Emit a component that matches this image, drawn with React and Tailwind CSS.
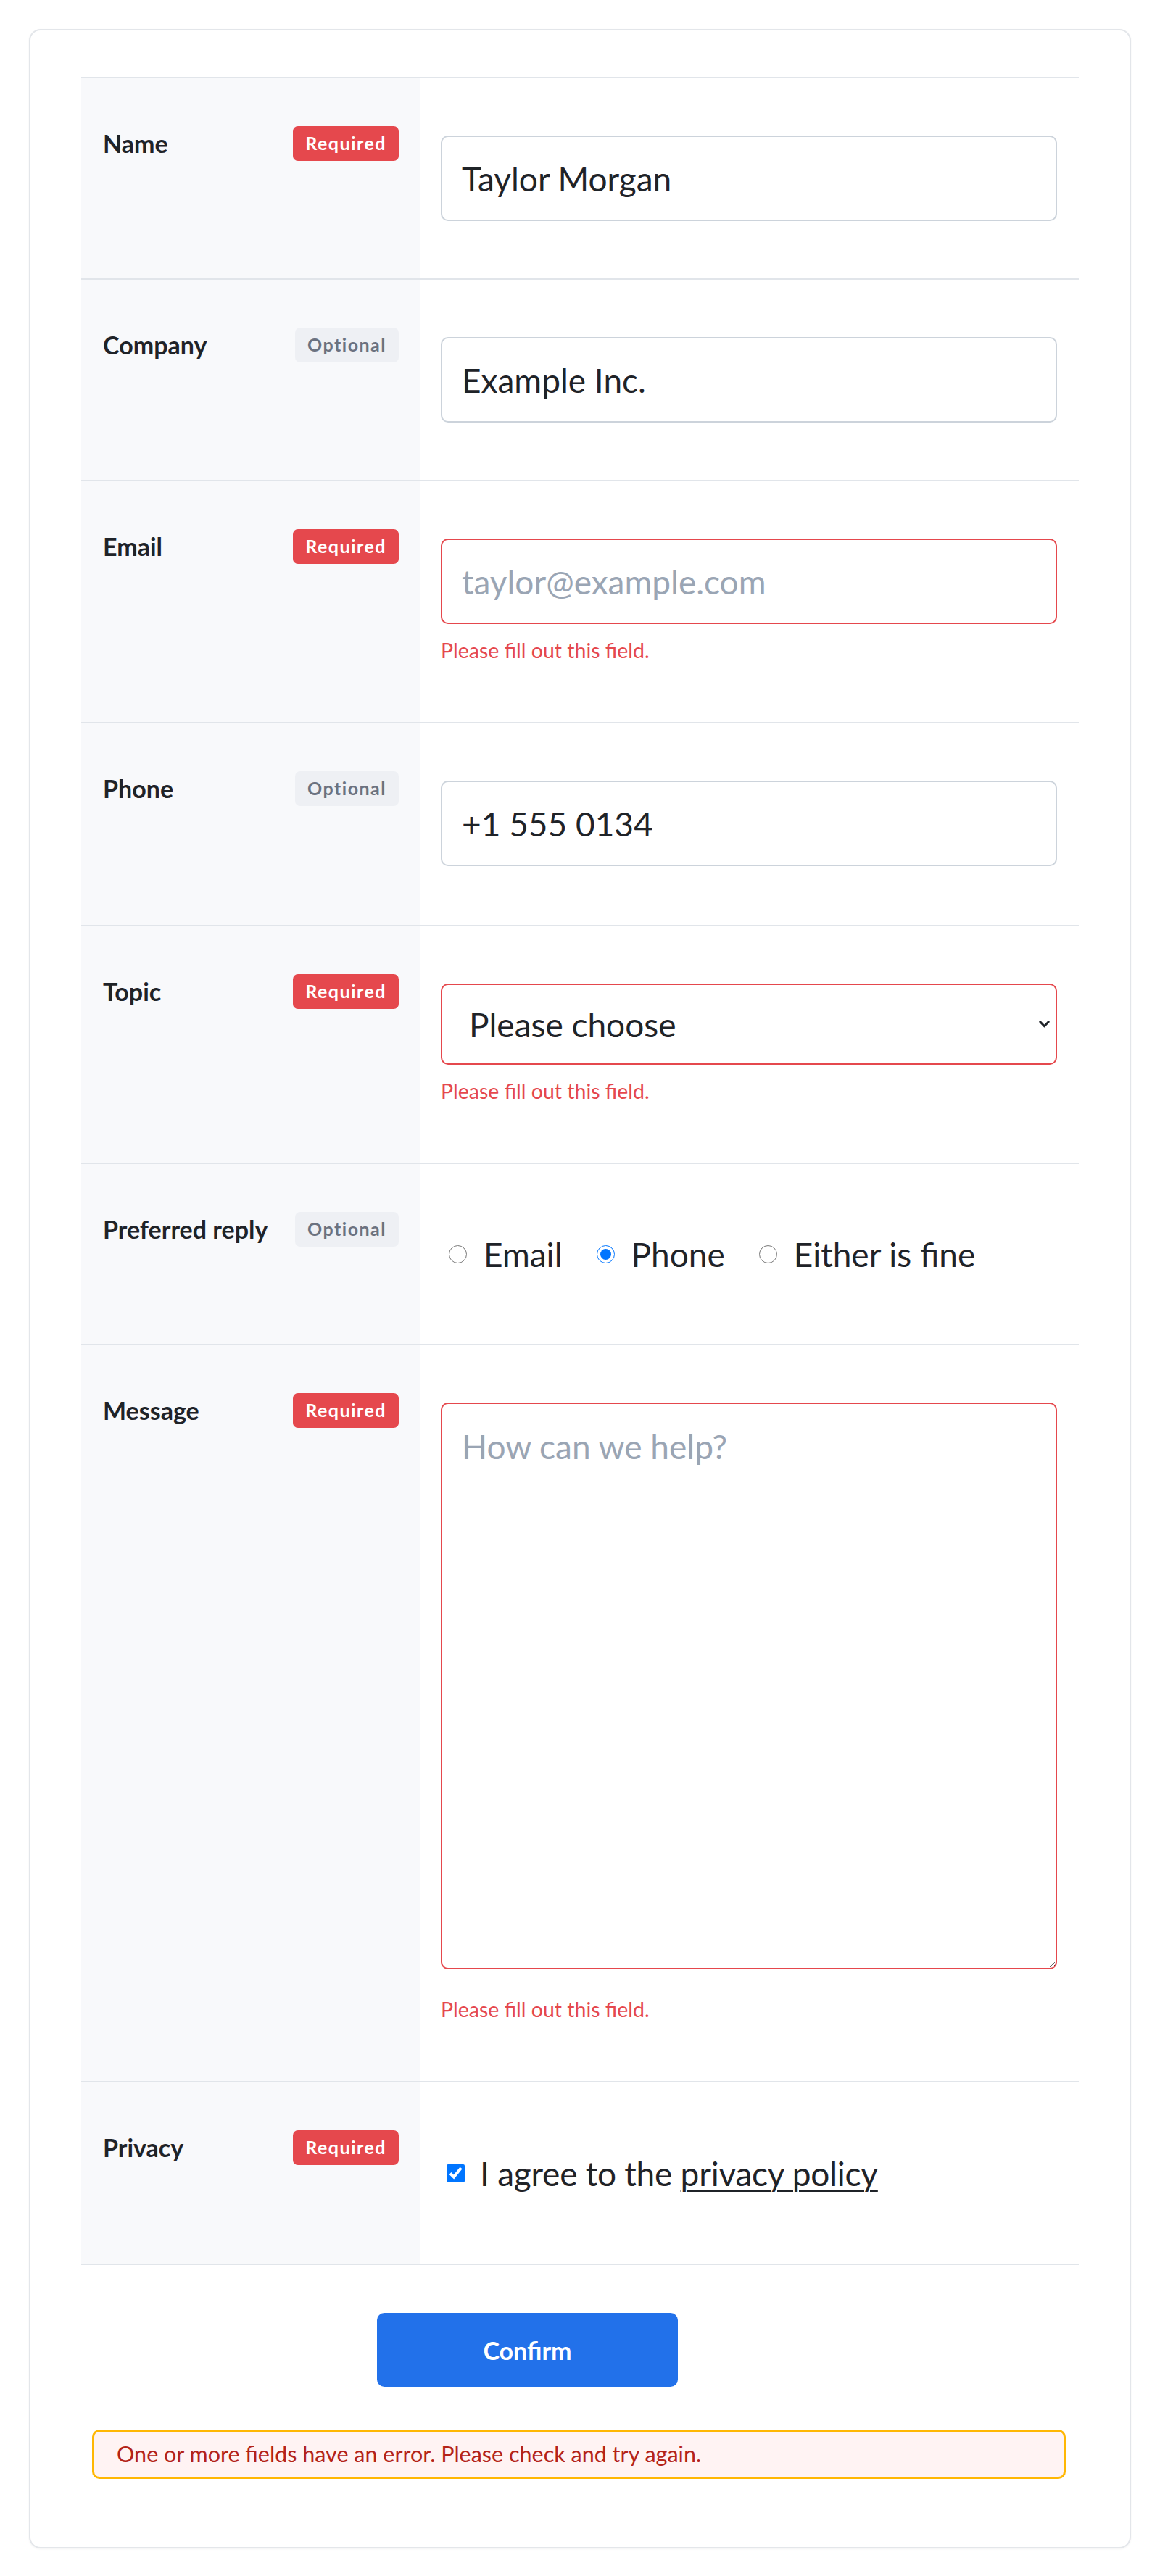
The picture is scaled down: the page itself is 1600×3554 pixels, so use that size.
import React from "react";

function Badge({ required }) {
  if (required) {
    return (
      <span className="inline-flex h-[48px] items-center rounded-[7px] bg-[#e5484d] px-[17px] text-[25px] font-bold tracking-[0.06em] text-white">
        Required
      </span>
    );
  }
  return (
    <span className="inline-flex h-[48px] items-center rounded-[7px] bg-[#eef0f4] px-[17px] text-[25px] font-bold tracking-[0.06em] text-[#6b7280]">
      Optional
    </span>
  );
}

function Row({ label, required, children }) {
  return (
    <div className="flex border-b-2 border-[#e1e5ea]">
      <div className="w-[468px] shrink-0 bg-[#f8f9fb] px-[30px] pt-[66px]">
        <div className="flex items-center justify-between">
          <span className="text-[34px] font-bold leading-[1.4] text-[#1f2328]">{label}</span>
          <Badge required={required} />
        </div>
      </div>
      <div className="min-w-0 flex-1 py-[79px] pl-[28px] pr-[30px]">{children}</div>
    </div>
  );
}

function FieldError({ className = "mt-[16px]" }) {
  return (
    <p className={`${className} text-[28.5px] leading-[40px] text-[#e5484d]`}>Please fill out this field.</p>
  );
}

const inputBase =
  "block h-[118px] w-full rounded-[10px] border-2 bg-white px-[27px] text-[46px] text-[#1f2328] outline-none placeholder:text-[#9aa5b4]";

export default function App() {
  const replyOptions = ["Email", "Phone", "Either is fine"];

  return (
    <div className="min-h-screen bg-white p-[40px] font-['Lato','Liberation_Sans',sans-serif] text-[#1f2328]">
      <form
        className="rounded-[16px] border-2 border-[#e3e6ea] bg-white px-[70px] pb-[94px] pt-[64px] shadow-[0_1px_3px_rgba(0,0,0,0.05)]"
        onSubmit={(e) => e.preventDefault()}
      >
        <div className="border-t-2 border-[#e1e5ea]">
          <Row label="Name" required>
            <input className={`${inputBase} border-[#ccd3db]`} defaultValue="Taylor Morgan" />
          </Row>

          <Row label="Company">
            <input className={`${inputBase} border-[#ccd3db]`} defaultValue="Example Inc." />
          </Row>

          <Row label="Email" required>
            <input
              type="email"
              className={`${inputBase} border-[#e5484d]`}
              placeholder="taylor@example.com"
            />
            <FieldError />
          </Row>

          <Row label="Phone">
            <div className="pb-[2px]">
              <input className={`${inputBase} border-[#ccd3db]`} defaultValue="+1 555 0134" />
            </div>
          </Row>

          <Row label="Topic" required>
            <div className="relative">
              <select
                defaultValue=""
                className="block h-[112px] w-full appearance-none rounded-[10px] border-2 border-[#e5484d] bg-white pl-[37px] pr-[60px] text-[46px] text-[#1f2328] outline-none"
              >
                <option value="">Please choose</option>
                <option value="sales">Sales</option>
                <option value="support">Support</option>
                <option value="other">Other</option>
              </select>
              <svg
                className="pointer-events-none absolute right-[10px] top-1/2 -translate-y-1/2"
                width="15"
                height="10"
                viewBox="0 0 15 10"
                fill="none"
              >
                <path d="M1.8 1.8 7.5 7.8l5.7-6" stroke="#1f2328" strokeWidth="3" strokeLinecap="round" strokeLinejoin="round" />
              </svg>
            </div>
            <FieldError />
          </Row>

          <Row label="Preferred reply">
            <div className="flex h-[90px] items-center gap-[47px] pl-[11px] text-[46px] text-[#1f2328]">
              {replyOptions.map((opt) => (
                <label key={opt} className="flex items-center gap-[23px]">
                  <input
                    type="radio"
                    name="reply"
                    defaultChecked={opt === "Phone"}
                    className="m-0 h-[25px] w-[25px]"
                  />
                  <span>{opt}</span>
                </label>
              ))}
            </div>
          </Row>

          <Row label="Message" required>
            <textarea
              className="block h-[782px] w-full rounded-[10px] border-2 border-[#e5484d] bg-white px-[27px] pt-[24px] text-[46px] leading-[1.5] text-[#1f2328] outline-none placeholder:text-[#9aa5b4]"
              placeholder="How can we help?"
            />
            <FieldError className="mt-[35px]" />
          </Row>

          <Row label="Privacy" required>
            <label className="flex h-[92px] items-center gap-[21px] pl-[8px] text-[46px] tracking-[-0.005em] text-[#1f2328]">
              <input type="checkbox" defaultChecked className="m-0 h-[25px] w-[25px]" />
              <span>
                I agree to the{" "}
                <a href="#privacy" className="text-[#1f2328] underline decoration-2 underline-offset-[6px]">
                  privacy policy
                </a>
              </span>
            </label>
          </Row>
        </div>

        <div className="mt-[66px] pl-[408px]">
          <button
            type="submit"
            className="h-[102px] w-[415px] rounded-[10px] bg-[#2271ea] text-[34px] font-bold text-white"
          >
            Confirm
          </button>
        </div>

        <div className="ml-[15px] mr-[18px] mt-[59px] flex h-[68px] items-center rounded-[10px] border-[3px] border-[#ffb703] bg-[#fff3f3] pl-[31px] text-[30.5px] text-[#b42318]">
          One or more fields have an error. Please check and try again.
        </div>
      </form>
    </div>
  );
}
